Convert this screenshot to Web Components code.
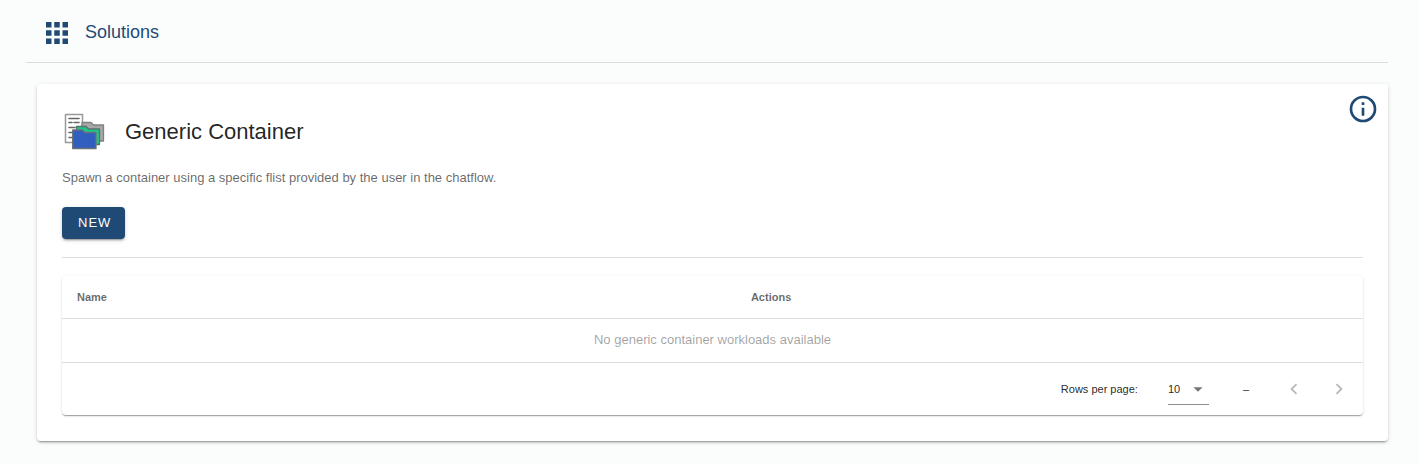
<!DOCTYPE html>
<html lang="en">
<head>
<meta charset="utf-8">
<title>Solutions</title>
<style>
  body {
    margin: 0;
    background: #fbfdfd;
    color: rgba(0, 0, 0, 0.87);
    font-family: "Liberation Sans", Arial, sans-serif;
  }
</style>
</head>
<body>
<solutions-page>
  <page-header slot="header">Solutions</page-header>
  <solution-card>
    <folders-icon slot="icon"></folders-icon>
    <span slot="title">Generic Container</span>
    <span slot="description">Spawn a container using a specific flist provided by the user in the chatflow.</span>
    <action-button slot="action">NEW</action-button>
    <workload-table empty-text="No generic container workloads available"></workload-table>
  </solution-card>
</solutions-page>

<script>
  const define = (name, html) => customElements.define(name, class extends HTMLElement {
    constructor() {
      super();
      const template = document.createElement('template');
      template.innerHTML = html;
      this.attachShadow({ mode: 'open' }).append(template.content.cloneNode(true));
    }
    connectedCallback() {
      const empty = this.shadowRoot.querySelector('.empty');
      if (empty) empty.textContent = this.getAttribute('empty-text');
    }
  });

  define('solutions-page', `
    <style>
      :host { display: block; padding: 0 31px 22px 26px; }
      main { padding: 21px 0 0 11px; }
    </style>
    <slot name="header"></slot>
    <main><slot></slot></main>`);

  define('page-header', `
    <style>
      :host { display: block; color: #1f4a75; border-bottom: 1px solid #dcdede; }
      header { display: flex; align-items: center; gap: 17px; height: 62px; padding: 1px 20px 0; box-sizing: border-box; }
      svg { width: 22px; height: 22px; margin-top: 3px; fill: currentColor; }
      h1 { margin: 0; font-size: 18px; font-weight: 400; line-height: 24px; }
    </style>
    <header>
      <svg viewBox="0 0 16 16" aria-hidden="true"><path d="M0 0h4v4H0zM6 0h4v4H6zM12 0h4v4h-4zM0 6h4v4H0zM6 6h4v4H6zM12 6h4v4h-4zM0 12h4v4H0zM6 12h4v4H6zM12 12h4v4h-4z"/></svg>
      <h1><slot></slot></h1>
    </header>`);

  define('folders-icon', `
    <style>
      :host { display: block; }
      svg { display: block; width: 44px; height: 40px; }
    </style>
    <svg viewBox="0 0 44 40" aria-hidden="true" stroke-linejoin="round">
      <path d="M3.500 2.500H20.500V30.500H3.500Z" fill="#fff" stroke="#999" stroke-width="1.500"/>
      <path d="M7 6.500h10M7 10.500h3M12 10.500h5M7 15.500h6M7 20.500h5M7 25.500h5" stroke="#666" stroke-width="1.600" stroke-linecap="round"/>
      <path d="M20 28V10.500h9l2.500 2.500H41.500V29H22Z" fill="#a9a6a6" stroke="#808080" stroke-width="1.300"/>
      <path d="M14.500 32V14.500h9.500l2.500 2.500H37.500V32.500H16Z" fill="#1bc98d" stroke="#557568" stroke-width="1.300"/>
      <path d="M10.700 36.500V18H20.500l2.500 2.500H34V36.500Z" fill="#305fc0" stroke="#6b7078" stroke-width="1.300"/>
    </svg>`);

  define('action-button', `
    <style>
      :host { display: inline-block; }
      button {
        display: block; height: 32px; padding: 0 14px 0 16px; border: 0; border-radius: 4px;
        background: #1f4a75; color: #fff; font: 400 13px/32px "Liberation Sans", Arial, sans-serif;
        letter-spacing: 1px; cursor: pointer;
        box-shadow: 0 3px 1px -2px rgba(0,0,0,.2), 0 2px 2px rgba(0,0,0,.14), 0 1px 5px rgba(0,0,0,.12);
      }
    </style>
    <button type="button"><slot></slot></button>`);

  define('info-button', `
    <style>
      :host { display: block; }
      button { display: block; padding: 0; border: 0; background: none; color: #1f4a75; cursor: pointer; }
      svg { display: block; width: 32px; height: 32px; fill: currentColor; }
    </style>
    <button type="button" aria-label="Information">
      <svg viewBox="0 0 24 24" aria-hidden="true"><path d="M11 9h2V7h-2M12 20c-4.410 0-8-3.590-8-8s3.590-8 8-8 8 3.590 8 8-3.590 8-8 8m0-18A10 10 0 0 0 2 12a10 10 0 0 0 10 10 10 10 0 0 0 10-10A10 10 0 0 0 12 2m-1 15h2v-6h-2v6z"/></svg>
    </button>`);

  define('solution-card', `
    <style>
      :host {
        display: block; position: relative; padding: 26px 25px; background: #fff; border-radius: 4px;
        box-shadow: 0 3px 1px -2px rgba(0,0,0,.2), 0 2px 2px rgba(0,0,0,.14), 0 1px 5px rgba(0,0,0,.12);
      }
      info-button { position: absolute; top: 9px; right: 9px; }
      .heading { display: flex; align-items: center; gap: 19px; height: 44px; }
      h2 { margin: 0; font-size: 22px; line-height: 28px; font-weight: 400; }
      p { margin: 14px 0 19px; font-size: 13px; line-height: 20px; color: rgba(0,0,0,.6); }
      .action { display: flex; }
      hr { margin: 18px 0; border: 0; border-top: 1px solid #dedede; }
    </style>
    <info-button></info-button>
    <div class="heading"><slot name="icon"></slot><h2><slot name="title"></slot></h2></div>
    <p><slot name="description"></slot></p>
    <div class="action"><slot name="action"></slot></div>
    <hr>
    <slot></slot>`);

  define('table-pager', `
    <style>
      :host { display: flex; align-items: center; justify-content: flex-end; height: 52px; padding: 0 13px; font-size: 11px; }
      label { margin-right: 30px; }
      .select { display: grid; align-items: center; width: 41px; height: 30px; border-bottom: 1px solid #8c8c8c; }
      .select > * { grid-area: 1 / 1; }
      select {
        appearance: none; width: 100%; height: 30px; margin: 0; padding: 0; border: 0; background: none;
        color: inherit; font: inherit;
      }
      .select svg { justify-self: end; width: 22px; height: 22px; fill: #757575; pointer-events: none; }
      output { margin: 0 34px; }
      .nav { display: flex; gap: 23px; }
      button { display: block; padding: 0; border: 0; background: none; color: rgba(0,0,0,.28); }
      button svg { display: block; width: 22px; height: 22px; fill: currentColor; }
    </style>
    <label for="rows">Rows per page:</label>
    <span class="select">
      <select id="rows"><option>10</option><option>25</option><option>50</option></select>
      <svg viewBox="0 0 24 24" aria-hidden="true"><path d="M7 10l5 5 5-5z"/></svg>
    </span>
    <output>–</output>
    <div class="nav">
      <button type="button" disabled aria-label="Previous page"><svg viewBox="0 0 24 24" aria-hidden="true"><path d="M15.410 16.580 10.830 12l4.580-4.590L14 6l-6 6 6 6z"/></svg></button>
      <button type="button" disabled aria-label="Next page"><svg viewBox="0 0 24 24" aria-hidden="true"><path d="M8.590 16.580 13.170 12 8.590 7.410 10 6l6 6-6 6z"/></svg></button>
    </div>`);

  define('workload-table', `
    <style>
      :host {
        display: block; background: #fff; border-radius: 4px;
        box-shadow: 0 2px 1px -1px rgba(0,0,0,.2), 0 1px 1px rgba(0,0,0,.14), 0 1px 3px rgba(0,0,0,.12);
      }
      table { width: 100%; border-collapse: separate; border-spacing: 0; table-layout: fixed; }
      col:first-child { width: 51.8%; }
      th, td { box-sizing: border-box; padding: 0 15px; border-bottom: 1px solid #dedede; }
      th { height: 43px; text-align: left; font-size: 11px; line-height: 16px; color: rgba(0,0,0,.6); }
      td { height: 44px; padding-bottom: 2px; text-align: center; font-size: 13px; line-height: 20px; color: rgba(0,0,0,.38); }
    </style>
    <table>
      <colgroup><col><col></colgroup>
      <thead><tr><th scope="col">Name</th><th scope="col">Actions</th></tr></thead>
      <tbody><tr><td class="empty" colspan="2"></td></tr></tbody>
    </table>
    <table-pager></table-pager>`);
</script>
</body>
</html>
